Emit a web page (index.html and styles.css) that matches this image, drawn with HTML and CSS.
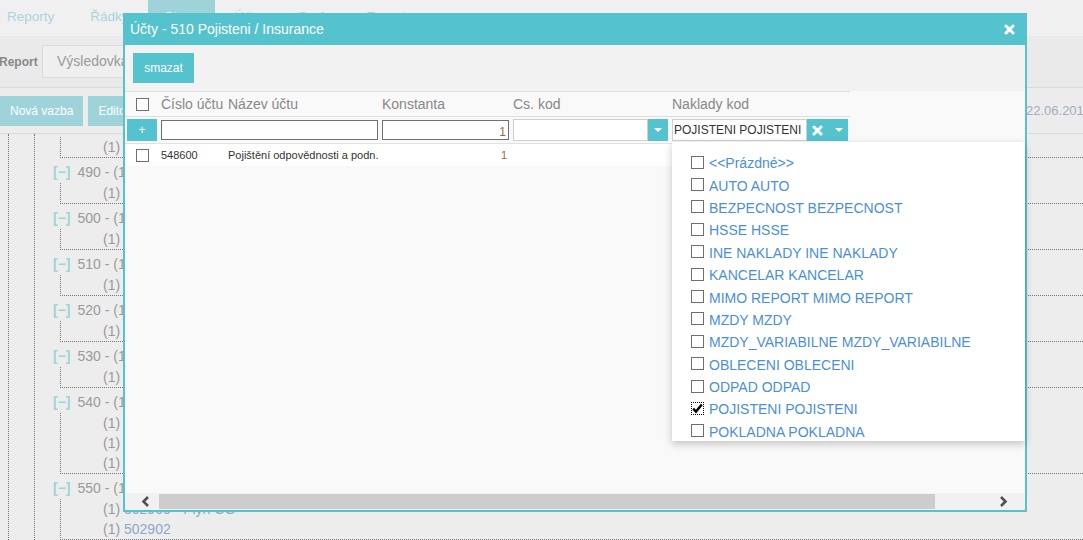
FILE: index.html
```html
<!DOCTYPE html>
<html lang="cs">
<head>
<meta charset="utf-8">
<title>Účty - 510 Pojisteni / Insurance</title>
<link rel="stylesheet" href="styles.css">
</head>
<body>
<div class="page">
  <nav class="tabs">
    <span class="tab first">Reporty</span>
    <span class="tab">Řádky</span>
    <span class="tab active">Stavy</span>
    <span class="tab">Účty</span>
    <span class="tab">Grafy</span>
    <span class="tab">Export</span>
  </nav>
  <div class="reportbar">
    <span class="rlabel">Report</span>
    <div class="rselect">Výsledovka</div>
  </div>
  <div class="btnbar">
    <button class="pbtn">Nová vazba</button>
    <button class="pbtn">Editovat</button>
    <span class="date">22.06.2017</span>
  </div>
  <div class="tree">
    <div class="tree-l2">
      <div class="grp grp-top">
        <div class="kids"><div class="kid">(1) <span class="acc">548100</span></div></div>
      </div>
      <div class="grp">
        <div class="ghead"><span class="tog">[−]</span>490 - (1)</div>
        <div class="kids"><div class="kid">(1) <span class="acc">511000</span></div></div>
      </div>
      <div class="grp">
        <div class="ghead"><span class="tog">[−]</span>500 - (1)</div>
        <div class="kids"><div class="kid">(1) <span class="acc">518100</span></div></div>
      </div>
      <div class="grp">
        <div class="ghead"><span class="tog">[−]</span>510 - (1)</div>
        <div class="kids"><div class="kid">(1) <span class="acc">548600</span></div></div>
      </div>
      <div class="grp">
        <div class="ghead"><span class="tog">[−]</span>520 - (1)</div>
        <div class="kids"><div class="kid">(1) <span class="acc">518300</span></div></div>
      </div>
      <div class="grp">
        <div class="ghead"><span class="tog">[−]</span>530 - (1)</div>
        <div class="kids"><div class="kid">(1) <span class="acc">518400</span></div></div>
      </div>
      <div class="grp">
        <div class="ghead"><span class="tog">[−]</span>540 - (1)</div>
        <div class="kids">
          <div class="kid">(1) <span class="acc">502100</span></div>
          <div class="kid">(1) <span class="acc">502200</span></div>
          <div class="kid">(1) <span class="acc">502300</span></div>
        </div>
      </div>
      <div class="grp">
        <div class="ghead"><span class="tog">[−]</span>550 - (1)</div>
        <div class="kids">
          <div class="kid">(1) <span class="acc">502900 - Plyn CG</span></div>
          <div class="kid">(1) <span class="acc">502902</span></div>
        </div>
      </div>
    </div>
  </div>
</div>

<div class="modal">
  <div class="mhead">
    <span class="mtitle">Účty - 510 Pojisteni / Insurance</span>
    <svg class="xicon" width="11" height="11" viewBox="0 0 11 11"><path d="M2 2 L9 9 M9 2 L2 9" stroke="#fff" stroke-width="3" stroke-linecap="round"/></svg>
  </div>
  <div class="mtool">
    <button class="smazat">smazat</button>
  </div>
  <div class="mgrid">
    <div class="grow ghdr">
      <div class="c-cb"><span class="cb"></span></div>
      <div class="c-txt">Číslo účtu</div>
      <div class="c-txt">Název účtu</div>
      <div class="c-txt">Konstanta</div>
      <div class="c-txt">Cs. kod</div>
      <div class="c-txt">Naklady kod</div>
    </div>
    <div class="grow gfilter">
      <div class="c-add"><button class="addbtn">+</button></div>
      <div class="c-span2"><div class="finput dark"></div></div>
      <div class="c-txt"><div class="finput dark num">1</div></div>
      <div class="c-txt">
        <div class="combo">
          <div class="finput light wide"></div>
          <div class="cbtn"><svg width="8" height="4" viewBox="0 0 8 4"><path d="M0 0 H8 L4 4 Z" fill="#fff"/></svg></div>
        </div>
      </div>
      <div class="c-txt">
        <div class="combo">
          <div class="finput light sel">POJISTENI POJISTENI</div>
          <div class="cbtn wide2">
            <svg width="11" height="11" viewBox="0 0 11 11"><path d="M2 2 L9 9 M9 2 L2 9" stroke="#fff" stroke-width="3" stroke-linecap="round"/></svg>
            <svg width="8" height="4" viewBox="0 0 8 4"><path d="M0 0 H8 L4 4 Z" fill="#fff"/></svg>
          </div>
        </div>
      </div>
    </div>
    <div class="grow gdata">
      <div class="c-cb"><span class="cb"></span></div>
      <div class="c-txt">548600</div>
      <div class="c-txt">Pojištění odpovědnosti a podn.</div>
      <div class="c-num">1</div>
      <div class="c-txt"></div>
      <div class="c-txt"></div>
    </div>
  </div>
  <div class="mscroll">
    <div class="sb-l"><svg width="9" height="11" viewBox="0 0 9 11"><path d="M7 1 L2.5 5.5 L7 10" fill="none" stroke="#505050" stroke-width="2.6"/></svg></div>
    <div class="sb-thumb"></div>
    <div class="sb-space"></div>
    <div class="sb-r"><svg width="9" height="11" viewBox="0 0 9 11"><path d="M2 1 L6.5 5.5 L2 10" fill="none" stroke="#505050" stroke-width="2.6"/></svg></div>
  </div>
</div>

<div class="dropdown">
  <div class="ditem"><span class="cb"></span><span>&lt;&lt;Prázdné&gt;&gt;</span></div>
  <div class="ditem"><span class="cb"></span><span>AUTO AUTO</span></div>
  <div class="ditem"><span class="cb"></span><span>BEZPECNOST BEZPECNOST</span></div>
  <div class="ditem"><span class="cb"></span><span>HSSE HSSE</span></div>
  <div class="ditem"><span class="cb"></span><span>INE NAKLADY INE NAKLADY</span></div>
  <div class="ditem"><span class="cb"></span><span>KANCELAR KANCELAR</span></div>
  <div class="ditem"><span class="cb"></span><span>MIMO REPORT MIMO REPORT</span></div>
  <div class="ditem"><span class="cb"></span><span>MZDY MZDY</span></div>
  <div class="ditem"><span class="cb"></span><span>MZDY_VARIABILNE MZDY_VARIABILNE</span></div>
  <div class="ditem"><span class="cb"></span><span>OBLECENI OBLECENI</span></div>
  <div class="ditem"><span class="cb"></span><span>ODPAD ODPAD</span></div>
  <div class="ditem"><span class="cb checked"><svg width="13" height="13" viewBox="0 0 13 13"><path d="M2.2 6.6 L5 9.6 L10.8 2.4" fill="none" stroke="#000" stroke-width="2.4"/></svg></span><span>POJISTENI POJISTENI</span></div>
  <div class="ditem"><span class="cb"></span><span>POKLADNA POKLADNA</span></div>
</div>
</body>
</html>
```

FILE: styles.css
```css
* { box-sizing: border-box; }
html, body { margin: 0; padding: 0; }
body {
  width: 1083px;
  height: 540px;
  overflow: hidden;
  position: relative;
  background: #ededed;
  font-family: "Liberation Sans", Arial, sans-serif;
}

/* background page */
.tabs { height: 36px; background: #f0f0f0; display: flex; }
.tab {
  padding: 0 17px 3px;
  margin-right: 2px;
  line-height: 33px;
  font-size: 13.5px;
  color: #a8d5dc;
  white-space: nowrap;
}
.tab.first { margin-left: -10px; }
.tab.active { background: #9fd3da; color: #fff; }

.reportbar {
  height: 52px;
  background: #eaeaea;
  border-bottom: 1px solid #dadada;
  display: flex;
  align-items: center;
}
.rlabel { font-weight: bold; font-size: 12px; color: #888; width: 43px; margin-left: -1px; }
.rselect {
  height: 33px;
  width: 260px;
  border: 1px solid #dcdcdc;
  background: #efefef;
  padding-left: 14px;
  line-height: 31px;
  font-size: 14px;
  color: #9a9a9a;
  white-space: nowrap;
}

.btnbar {
  height: 46px;
  background: #ececec;
  border-bottom: 1px solid #dadada;
  display: flex;
  align-items: flex-start;
  padding-top: 8px;
  gap: 5px;
}
.pbtn {
  height: 30px;
  border: 0;
  background: #9fd3da;
  color: #fff;
  font: 12px "Liberation Sans", Arial, sans-serif;
  padding: 0 10px;
  white-space: nowrap;
}
.date {
  margin-left: auto;
  width: 57px;
  white-space: nowrap;
  font-size: 13px;
  line-height: 30px;
  color: #a3adbd;
}

.tree { margin-left: 8px; border-left: 1px dotted #777; }
.tree-l2 { margin-left: 25px; border-left: 1px dotted #777; }
.grp { padding-top: 4px; }
.grp.grp-top { padding-top: 3px; }
.ghead {
  height: 21px;
  line-height: 21px;
  padding-left: 18px;
  font-size: 14px;
  color: #9a9a9a;
  white-space: nowrap;
}
.tog { color: #9fd3da; font-weight: bold; margin-right: 7px; }
.kids {
  margin-left: 25px;
  border-left: 1px dotted #777;
  border-bottom: 1px dotted #777;
  padding-left: 42px;
}
.kid {
  height: 20px;
  line-height: 20px;
  font-size: 14px;
  color: #9a9a9a;
  white-space: nowrap;
}
.kid .acc { color: #8ea8c8; }

/* modal */
.modal {
  position: absolute;
  left: 123px;
  top: 13px;
  width: 904px;
  height: 499px;
  border: 2px solid #55c3ce;
  border-top: 0;
  background: #f9f9f9;
  display: flex;
  flex-direction: column;
}
.mhead {
  height: 32px;
  flex: none;
  background: #55c3ce;
  display: flex;
  align-items: center;
  justify-content: space-between;
  padding: 0 10px 0 5px;
  color: #fff;
  font-size: 14px;
}
.xicon { display: block; }
.mtool { height: 46px; flex: none; background: #f2f2f2; padding: 8px; }
.smazat {
  width: 61px;
  height: 30px;
  border: 0;
  background: #55c3ce;
  color: #fff;
  font: 12px "Liberation Sans", Arial, sans-serif;
  padding: 0;
}

.mgrid { flex: 1; background: #f9f9f9; overflow: hidden; }
.grow {
  display: grid;
  grid-template-columns: 32px 67px 154px 131px 159px 182px;
  width: 725px;
}
.c-cb { padding-left: 11px; display: flex; align-items: center; }
.c-txt { padding-left: 4px; white-space: nowrap; overflow: hidden; }
.c-span2 { grid-column: span 2; padding-left: 4px; }
.c-num { text-align: right; padding-right: 2px; color: #9a6a2f; }

.cb {
  display: block;
  width: 13px;
  height: 13px;
  border: 1px solid #6f6f6f;
  background: #fff;
  flex: none;
  position: relative;
}
.cb svg { position: absolute; left: -1px; top: -1px; }
.cb.checked { border: 1px dotted #000; }

.ghdr {
  height: 26px;
  border-top: 1px solid #dedede;
  border-bottom: 1px solid #dedede;
  align-items: center;
  font-size: 14px;
  color: #888;
}

.gfilter {
  height: 27px;
  border-bottom: 1px solid #e2e2e2;
  align-items: center;
}
.c-add { padding-left: 2px; }
.addbtn {
  display: block;
  width: 30px;
  height: 22px;
  border: 0;
  padding: 0;
  background: #55c3ce;
  color: #fff;
  font: 12px "Liberation Sans", Arial, sans-serif;
}
.finput {
  height: 20px;
  background: #fff;
  font-size: 12px;
  color: #333;
  white-space: nowrap;
  overflow: hidden;
}
.finput.dark { border: 1px solid #6f6f6f; }
.finput.num { text-align: right; padding: 4px 2px 0 0; line-height: 14px; color: #9a6a2f; }
.finput.light { border: 1px solid #cfcfcf; height: 22px; }
.finput.wide { width: 135px; }
.finput.sel { width: 135px; line-height: 20px; padding-left: 1px; }
.combo { display: flex; }
.cbtn {
  width: 20px;
  height: 22px;
  background: #55c3ce;
  display: flex;
  align-items: center;
  justify-content: center;
}
.cbtn svg { display: block; }
.cbtn.wide2 { width: 41px; justify-content: flex-start; padding-left: 5px; gap: 12px; }

.gdata {
  height: 22px;
  background: #fff;
  align-items: center;
  font-size: 11px;
  color: #333;
}

.mscroll { height: 17px; flex: none; background: #f1f1f1; display: flex; align-items: center; }
.sb-l { width: 34px; padding-left: 16px; display: flex; align-items: center; }
.sb-r { width: 34px; padding-left: 8px; display: flex; align-items: center; }
.sb-l svg, .sb-r svg { display: block; }
.sb-thumb { width: 776px; height: 15px; background: #cdcdcd; }
.sb-space { flex: 1; }

/* dropdown overlay */
.dropdown {
  position: absolute;
  left: 672px;
  top: 142px;
  width: 353px;
  height: 299px;
  background: #fff;
  box-shadow: 0 3px 8px rgba(0, 0, 0, 0.22);
  padding: 9px 0 0 19px;
  overflow: hidden;
}
.ditem {
  height: 22.4px;
  display: flex;
  align-items: center;
  gap: 5px;
  font-size: 14px;
  color: #4a8fd8;
  white-space: nowrap;
}
.ditem span:last-child { padding-top: 2px; }
```
